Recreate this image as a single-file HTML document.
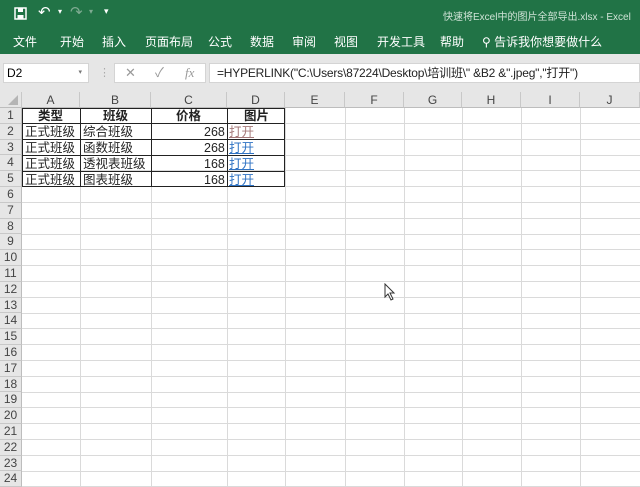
<!DOCTYPE html>
<html><head><meta charset="utf-8"><style>
*{margin:0;padding:0;box-sizing:border-box}
body{width:640px;height:486px;overflow:hidden;background:#fff;font-family:"Liberation Sans","Noto Sans CJK SC",sans-serif;position:relative}
.g{position:absolute;left:0;top:0;width:640px;height:54px;background:#217346;color:#fff}
.t{position:absolute;font-size:12px;top:33px;color:#fff;white-space:nowrap}
.gray{position:absolute;left:0;top:54px;width:640px;height:54px;background:#e6e6e6}
.box{position:absolute;background:#fff;border:1px solid #d4d4d4;white-space:nowrap}
.ch{position:absolute;top:92px;height:16px;background:#e6e6e6;font-size:12px;color:#444;text-align:center;line-height:16px;border-right:1px solid #c8c8c8;border-bottom:1px solid #bdbdbd}
.rh{position:absolute;left:0;width:22px;background:#e6e6e6;font-size:12px;color:#444;text-align:center;border-bottom:1px solid #c8c8c8;border-right:1px solid #bdbdbd}
.vl{position:absolute;top:108px;width:1px;height:378px;background:#dadada}
.hl{position:absolute;left:22px;width:618px;height:1px;background:#dadada}
.c{position:absolute;font-size:12.5px;color:#222;white-space:nowrap;line-height:16px}
</style></head><body>
<div class="g">
<svg style="position:absolute;left:14px;top:7px" width="14" height="14"><rect x="1" y="1" width="11" height="11" fill="none" stroke="#fff" stroke-width="1.5"/><rect x="4" y="1" width="5" height="4" fill="#fff"/><rect x="3.5" y="8" width="6" height="4" fill="#fff"/></svg>
<div style="position:absolute;left:38px;top:3px;font-size:15px">↶</div><div style="position:absolute;left:58px;top:7px;font-size:8px">▾</div>
<div style="position:absolute;left:70px;top:3px;font-size:15px;color:#7fab92">↷</div><div style="position:absolute;left:89px;top:7px;font-size:8px;color:#7fab92">▾</div>
<div style="position:absolute;left:104px;top:6px;font-size:9px">▾</div>
<div style="position:absolute;left:443px;top:8px;font-size:10px;color:#cfe3d6;white-space:nowrap">快速将Excel中的图片全部导出.xlsx  -  Excel</div>
<span class="t" style="left:13px">文件</span><span class="t" style="left:60px">开始</span><span class="t" style="left:102px">插入</span><span class="t" style="left:145px">页面布局</span><span class="t" style="left:208px">公式</span><span class="t" style="left:250px">数据</span><span class="t" style="left:292px">审阅</span><span class="t" style="left:334px">视图</span><span class="t" style="left:377px">开发工具</span><span class="t" style="left:440px">帮助</span><span class="t" style="left:482px">⚲ 告诉我你想要做什么</span>
</div>
<div class="gray"></div>
<div class="box" style="left:3px;top:63px;width:86px;height:20px;font-size:12px;line-height:18px;padding-left:3px">D2<span style="position:absolute;right:6px;font-size:7px;color:#777">▾</span></div>
<div style="position:absolute;left:99px;top:66px;color:#aaa;font-size:11px">⋮</div>
<div class="box" style="left:114px;top:63px;width:92px;height:20px;color:#999;font-size:13px;line-height:18px"><span style="position:absolute;left:10px">✕</span><span style="position:absolute;left:40px">✓</span><span style="position:absolute;left:70px;font-family:'Liberation Serif';font-style:italic">fx</span></div>
<div class="box" style="left:209px;top:63px;width:431px;height:20px;font-size:12px;line-height:18px;padding-left:7px;color:#222;letter-spacing:-0.2px">=HYPERLINK("C:\Users\87224\Desktop\培训班\" &amp;B2 &amp;".jpeg","打开")</div>
<div class="ch" style="left:0;width:22px;background:#e6e6e6"><svg width="10" height="10" style="position:absolute;right:3px;bottom:2px"><path d="M10 0L10 10L0 10Z" fill="#b5b5b5"/></svg></div>
<div class="ch" style="left:22px;width:58px">A</div><div class="ch" style="left:80px;width:71px">B</div><div class="ch" style="left:151px;width:76px">C</div><div class="ch" style="left:227px;width:58px">D</div><div class="ch" style="left:285px;width:60px">E</div><div class="ch" style="left:345px;width:59px">F</div><div class="ch" style="left:404px;width:58px">G</div><div class="ch" style="left:462px;width:59px">H</div><div class="ch" style="left:521px;width:59px">I</div><div class="ch" style="left:580px;width:60px">J</div>
<div id="rows"></div>
<div class="vl" style="left:80px"></div><div class="vl" style="left:151px"></div><div class="vl" style="left:227px"></div><div class="vl" style="left:285px"></div><div class="vl" style="left:345px"></div><div class="vl" style="left:404px"></div><div class="vl" style="left:462px"></div><div class="vl" style="left:521px"></div><div class="vl" style="left:580px"></div>
<script>
var h='';for(var i=1;i<=24;i++){var t=108+(i-1)*15.8;h+='<div class="rh" style="top:'+t+'px;height:15.8px;line-height:15px">'+i+'</div><div class="hl" style="top:'+(t+15)+'px"></div>';}
document.getElementById('rows').innerHTML=h;
</script>
<div style="position:absolute;left:22px;top:108px;width:263px;height:79px;border:1px solid #222;z-index:2"></div>
<div style="position:absolute;left:22px;top:123px;width:263px;height:1px;background:#222;z-index:2"></div>
<div style="position:absolute;left:22px;top:139px;width:263px;height:1px;background:#222;z-index:2"></div>
<div style="position:absolute;left:22px;top:155px;width:263px;height:1px;background:#222;z-index:2"></div>
<div style="position:absolute;left:22px;top:171px;width:263px;height:1px;background:#222;z-index:2"></div>
<div style="position:absolute;left:80px;top:108px;width:1px;height:79px;background:#222;z-index:2"></div>
<div style="position:absolute;left:151px;top:108px;width:1px;height:79px;background:#222;z-index:2"></div>
<div style="position:absolute;left:227px;top:108px;width:1px;height:79px;background:#222;z-index:2"></div>
<div class="c" style="left:38px;top:108px;font-weight:bold">类型</div><div class="c" style="left:103px;top:108px;font-weight:bold">班级</div><div class="c" style="left:176px;top:108px;font-weight:bold">价格</div><div class="c" style="left:244px;top:108px;font-weight:bold">图片</div>
<div class="c" style="left:25px;top:124px">正式班级</div><div class="c" style="left:83px;top:124px">综合班级</div><div class="c" style="left:204px;top:124px">268</div><div class="c" style="left:229px;top:124px;color:#a67a7a;text-decoration:underline">打开</div>
<div class="c" style="left:25px;top:140px">正式班级</div><div class="c" style="left:83px;top:140px">函数班级</div><div class="c" style="left:204px;top:140px">268</div><div class="c" style="left:229px;top:140px;color:#2f73c4;text-decoration:underline">打开</div>
<div class="c" style="left:25px;top:156px">正式班级</div><div class="c" style="left:83px;top:156px">透视表班级</div><div class="c" style="left:204px;top:156px">168</div><div class="c" style="left:229px;top:156px;color:#2f73c4;text-decoration:underline">打开</div>
<div class="c" style="left:25px;top:172px">正式班级</div><div class="c" style="left:83px;top:172px">图表班级</div><div class="c" style="left:204px;top:172px">168</div><div class="c" style="left:229px;top:172px;color:#2f73c4;text-decoration:underline">打开</div>
<svg style="position:absolute;left:384px;top:283px" width="12" height="18"><path d="M1 1L1 14L4 11L7 17L9 16L6 10L10 10Z" fill="#fff" stroke="#333" stroke-width="1"/></svg>
</body></html>
